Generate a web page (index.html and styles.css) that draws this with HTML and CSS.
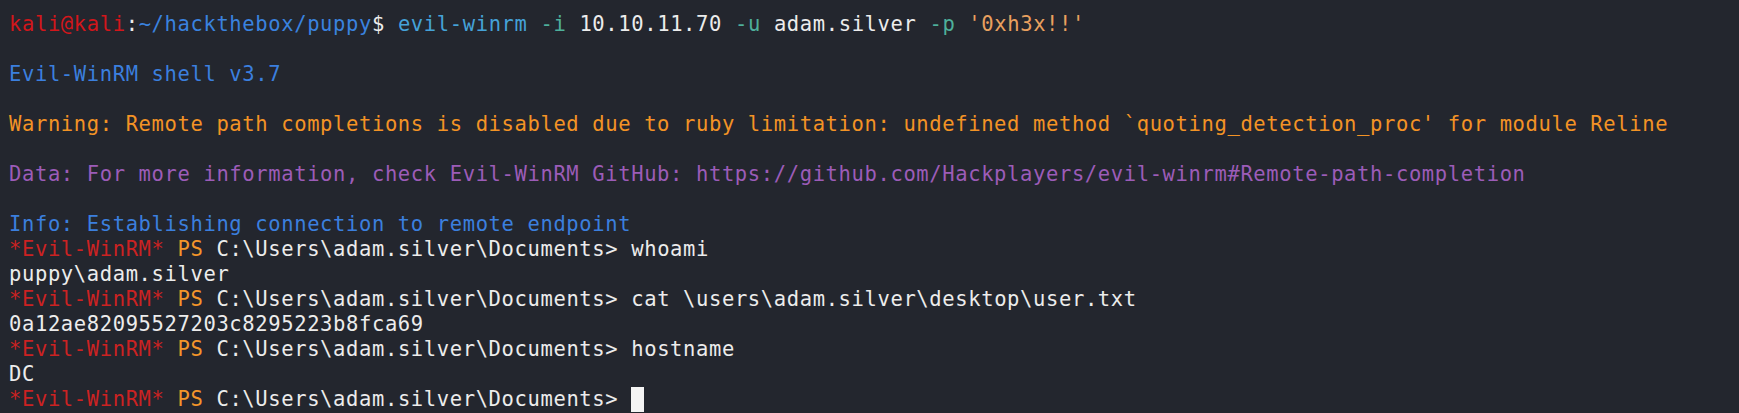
FILE: index.html
```html
<!DOCTYPE html>
<html lang="en">
<head>
<meta charset="utf-8">
<title>evil-winrm session</title>
<link rel="stylesheet" href="styles.css">
</head>
<body>
<div class="term">
  <div class="line"><span class="user">kali@kali</span><span class="white">:</span><span class="path">~/hackthebox/puppy</span><span class="white">$ </span><span class="cmd">evil-winrm</span> <span class="flag">-i</span> <span class="white">10.10.11.70</span> <span class="flag">-u</span> <span class="white">adam.silver</span> <span class="flag">-p</span> <span class="str">'0xh3x!!'</span></div>
  <div class="line"> </div>
  <div class="line info">Evil-WinRM shell v3.7</div>
  <div class="line"> </div>
  <div class="line warn">Warning: Remote path completions is disabled due to ruby limitation: undefined method `quoting_detection_proc' for module Reline</div>
  <div class="line"> </div>
  <div class="line data">Data: For more information, check Evil-WinRM GitHub: https://github.com/Hackplayers/evil-winrm#Remote-path-completion</div>
  <div class="line"> </div>
  <div class="line info">Info: Establishing connection to remote endpoint</div>
  <div class="line"><span class="ev">*Evil-WinRM*</span> <span class="ps">PS</span> <span class="white">C:\Users\adam.silver\Documents&gt; whoami</span></div>
  <div class="line white">puppy\adam.silver</div>
  <div class="line"><span class="ev">*Evil-WinRM*</span> <span class="ps">PS</span> <span class="white">C:\Users\adam.silver\Documents&gt; cat \users\adam.silver\desktop\user.txt</span></div>
  <div class="line white">0a12ae82095527203c8295223b8fca69</div>
  <div class="line"><span class="ev">*Evil-WinRM*</span> <span class="ps">PS</span> <span class="white">C:\Users\adam.silver\Documents&gt; hostname</span></div>
  <div class="line white">DC</div>
  <div class="line"><span class="ev">*Evil-WinRM*</span> <span class="ps">PS</span> <span class="white">C:\Users\adam.silver\Documents&gt; </span><span class="cursor"></span></div>
</div>
</body>
</html>
```

FILE: styles.css
```css
html, body {
  margin: 0;
  padding: 0;
  background: #23262e;
  height: 100%;
  overflow: hidden;
}

.term {
  padding: 12px 0 0 9px;
  font-family: "DejaVu Sans Mono", "Liberation Mono", monospace;
  font-size: 20.5px;
  letter-spacing: 0.62px;
  line-height: 25px;
  color: #e8e8e8;
}

.line {
  white-space: pre;
  height: 25px;
}

.white { color: #ececec; }
.user { color: #d3161b; }
.path { color: #3a82df; }
.cmd { color: #45a2d8; }
.flag { color: #4eb09b; }
.str { color: #e9a05f; }
.info { color: #3b7fde; }
.warn { color: #f39325; }
.data { color: #9c5cb8; }
.ev { color: #cc2222; }
.ps { color: #f2952a; }

.cursor {
  display: inline-block;
  width: 13px;
  height: 25px;
  vertical-align: top;
  background: #f4f4f4;
}
```
